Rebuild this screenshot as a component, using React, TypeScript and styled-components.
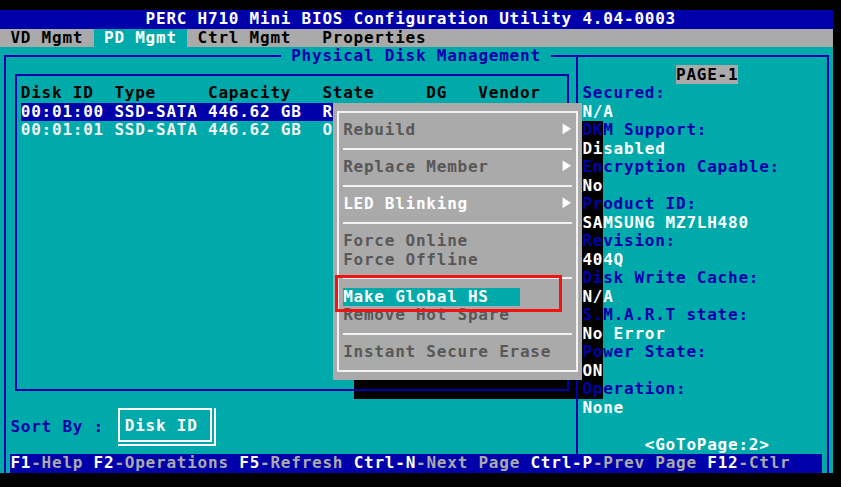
import React from "react";
import styled, { createGlobalStyle } from "styled-components";

const C = 10.4;
const R = 18.52;
const BLUE = "#0000aa";
const TEAL = "#00aaaa";
const GRAY = "#aaaaaa";
const DARK = "#585858";
const WHITE = "#ffffff";
const LINE = "#f2f2f2";

const Global = createGlobalStyle`
  html, body { margin: 0; padding: 0; background: #000; }
  body {
    font-family: "DejaVu Sans Mono", "Liberation Mono", monospace;
    font-weight: bold;
    font-size: 16px;
    letter-spacing: 0.767px;
  }
  #root { width: 841px; height: 487px; overflow: hidden; }
`;

const Screen = styled.div`
  position: relative;
  z-index: 0;
  margin-top: 10px;
  width: 833px;
  height: 463px;
  background: ${TEAL};
  display: flex;
  flex-direction: column;
  white-space: pre;
  line-height: ${R}px;
`;

const TitleBar = styled.div`
  height: ${R}px;
  flex: none;
  background: ${BLUE};
  color: ${WHITE};
  padding-left: ${14 * C}px;
`;

const TabBar = styled.div`
  height: ${R}px;
  flex: none;
  background: ${GRAY};
  display: flex;
`;

const Tab = styled.div<{ $active?: boolean; $offset?: number }>`
  padding: 0 ${C}px;
  margin-left: ${(p) => (p.$offset || 0) * C}px;
  background: ${(p) => (p.$active ? TEAL : "transparent")};
  color: ${(p) => (p.$active ? WHITE : "#000")};
`;

const Frame = styled.div`
  position: relative;
  flex: 1;
  margin: 8px 4px 0 4px;
  border: 2px solid ${BLUE};
  border-bottom: none;
  display: flex;
  flex-direction: column;
`;

const FrameTitle = styled.div`
  position: absolute;
  top: -10px;
  left: ${27 * C - 6}px;
  height: ${R}px;
  padding: 0 ${C}px;
  background: ${TEAL};
  color: ${BLUE};
`;

const Panels = styled.div`
  flex: 1;
  display: flex;
`;

const LeftPanel = styled.div`
  width: 570px;
  flex: none;
  display: flex;
  flex-direction: column;
`;

const ListBox = styled.div`
  box-sizing: border-box;
  margin: 17px 0 0 8.6px;
  width: 554px;
  height: 317px;
  border: 2px solid ${BLUE};
  padding: 8px 4.2px 0 4.2px;
`;

const ListHeader = styled.div`
  height: ${R}px;
  color: #000;
`;

const ListRow = styled.div<{ $selected?: boolean }>`
  height: ${R}px;
  width: ${52 * C}px;
  background: ${(p) => (p.$selected ? BLUE : "transparent")};
  color: ${(p) => (p.$selected ? WHITE : "#f2f2f2")};
`;

const SortRow = styled.div`
  display: flex;
  align-items: center;
  margin-top: 17.3px;
`;

const SortLabel = styled.div`
  margin-left: 4.4px;
  width: ${9 * C}px;
  color: ${BLUE};
`;

const SortBoxOuter = styled.div`
  margin-left: 14.3px;
  border-right: 2px solid ${WHITE};
  border-bottom: 2px solid ${WHITE};
  padding: 0 2px 2px 0;
`;

const SortBox = styled.div`
  border: 2px solid ${WHITE};
  padding: 7.1px 12.4px 3.6px 4.5px;
  color: ${WHITE};
`;

const RightPanel = styled.div`
  flex: 1;
  border-left: 2px solid ${BLUE};
  padding: 8.52px 0 0 4.4px;
`;

const InfoLine = styled.div<{ $kind: "label" | "value" }>`
  height: ${R}px;
  color: ${(p) => (p.$kind === "label" ? BLUE : WHITE)};
`;

const PageLine = styled.div`
  height: ${R}px;
  padding-left: ${9 * C}px;
`;

const PageTag = styled.span`
  background: ${GRAY};
  color: #000;
`;

const GoTo = styled.div`
  height: ${R}px;
  margin-top: ${R}px;
  padding-left: ${6 * C}px;
  color: ${WHITE};
`;

const BottomBar = styled.div`
  flex: none;
  height: ${R}px;
  margin-left: 4.4px;
  width: ${78 * C}px;
  background: ${BLUE};
`;

const Key = styled.span`
  color: ${WHITE};
`;

const Desc = styled.span`
  color: ${GRAY};
`;

const Shadow = styled.div<{ $x: number; $y: number; $w: number; $h: number }>`
  position: absolute;
  z-index: -1;
  left: ${(p) => p.$x * C}px;
  top: ${(p) => p.$y * R}px;
  width: ${(p) => p.$w * C}px;
  height: ${(p) => p.$h * R}px;
  background: #000;
`;

const Menu = styled.div`
  position: absolute;
  z-index: 2;
  left: ${32 * C}px;
  top: ${5 * R}px;
  width: ${24 * C}px;
  height: ${15 * R}px;
  box-sizing: border-box;
  padding: 8.26px 4.2px;
  background: ${GRAY};
`;

const MenuFrame = styled.div`
  box-sizing: border-box;
  height: 100%;
  border: 2px solid ${LINE};
  padding: 8.26px 4.2px 0 4.2px;
`;

const MenuItem = styled.div<{ $enabled?: boolean; $highlight?: boolean }>`
  height: ${R}px;
  display: flex;
  justify-content: space-between;
  width: ${(p) => (p.$highlight ? `${17 * C}px` : "auto")};
  background: ${(p) => (p.$highlight ? TEAL : "transparent")};
  color: ${(p) => (p.$enabled || p.$highlight ? WHITE : DARK)};
`;

const MenuSep = styled.div`
  height: ${R}px;
  background: linear-gradient(${LINE}, ${LINE}) center / 100% 2px no-repeat;
`;

const ArrowIcon = styled.svg`
  display: block;
  width: ${C}px;
  height: ${R}px;
`;

const Callout = styled.div`
  position: absolute;
  z-index: 3;
  left: 335px;
  top: 265px;
  width: 227px;
  height: 37px;
  box-sizing: border-box;
  border: 3px solid #f21313;
`;

const Arrow = () => (
  <ArrowIcon viewBox={`0 0 ${C} ${R}`}>
    <polygon points="0.6,2.4 9,7.8 0.6,13.2" fill={WHITE} />
  </ArrowIcon>
);

type MenuEntry =
  | { sep: true }
  | { label: string; enabled?: boolean; highlight?: boolean; sub?: boolean };

const menu: MenuEntry[] = [
  { label: "Rebuild", sub: true },
  { sep: true },
  { label: "Replace Member", sub: true },
  { sep: true },
  { label: "LED Blinking", enabled: true, sub: true },
  { sep: true },
  { label: "Force Online" },
  { label: "Force Offline" },
  { sep: true },
  { label: "Make Global HS", highlight: true },
  { label: "Remove Hot Spare" },
  { sep: true },
  { label: "Instant Secure Erase" },
];

const info: { text: string; kind: "label" | "value" }[] = [
  { text: "Secured:", kind: "label" },
  { text: "N/A", kind: "value" },
  { text: "DKM Support:", kind: "label" },
  { text: "Disabled", kind: "value" },
  { text: "Encryption Capable:", kind: "label" },
  { text: "No", kind: "value" },
  { text: "Product ID:", kind: "label" },
  { text: "SAMSUNG MZ7LH480", kind: "value" },
  { text: "Revision:", kind: "label" },
  { text: "404Q", kind: "value" },
  { text: "Disk Write Cache:", kind: "label" },
  { text: "N/A", kind: "value" },
  { text: "S.M.A.R.T state:", kind: "label" },
  { text: "No Error", kind: "value" },
  { text: "Power State:", kind: "label" },
  { text: "ON", kind: "value" },
  { text: "Operation:", kind: "label" },
  { text: "None", kind: "value" },
];

const keys: [string, string][] = [
  ["F1", "-Help "],
  ["F2", "-Operations "],
  ["F5", "-Refresh "],
  ["Ctrl-N", "-Next Page "],
  ["Ctrl-P", "-Prev Page "],
  ["F12", "-Ctlr"],
];

const disks = [
  { id: "00:01:00", type: "SSD-SATA", cap: "446.62 GB", state: "Ready", dg: "--", vendor: "ATA" },
  { id: "00:01:01", type: "SSD-SATA", cap: "446.62 GB", state: "Online", dg: "--", vendor: "ATA" },
];

const pad = (s: string, n: number) => s + " ".repeat(Math.max(0, n - s.length));

export default function App() {
  return (
    <>
      <Global />
      <Screen>
        <TitleBar>PERC H710 Mini BIOS Configuration Utility 4.04-0003</TitleBar>
        <TabBar>
          <Tab>VD Mgmt</Tab>
          <Tab $active>PD Mgmt</Tab>
          <Tab>Ctrl Mgmt</Tab>
          <Tab $offset={1}>Properties</Tab>
        </TabBar>
        <Frame>
          <FrameTitle>Physical Disk Management</FrameTitle>
          <Panels>
            <LeftPanel>
              <ListBox>
                <ListHeader>
                  {pad("Disk ID", 9) + pad("Type", 9) + pad("Capacity", 11) + pad("State", 10) + pad("DG", 5) + "Vendor"}
                </ListHeader>
                {disks.map((d, i) => (
                  <ListRow key={d.id} $selected={i === 0}>
                    {pad(d.id, 9) + pad(d.type, 9) + pad(d.cap, 11) + pad(d.state, 10) + pad(d.dg, 5) + d.vendor}
                  </ListRow>
                ))}
              </ListBox>
              <SortRow>
                <SortLabel>Sort By :</SortLabel>
                <SortBoxOuter>
                  <SortBox>Disk ID</SortBox>
                </SortBoxOuter>
              </SortRow>
            </LeftPanel>
            <RightPanel>
              <PageLine>
                <PageTag>PAGE-1</PageTag>
              </PageLine>
              {info.map((l, i) => (
                <InfoLine key={i} $kind={l.kind}>
                  {l.text}
                </InfoLine>
              ))}
              <GoTo>{"<GoToPage:2>"}</GoTo>
            </RightPanel>
          </Panels>
          <BottomBar>
            {keys.map(([k, d]) => (
              <React.Fragment key={k}>
                <Key>{k}</Key>
                <Desc>{d}</Desc>
              </React.Fragment>
            ))}
          </BottomBar>
        </Frame>

        <Shadow $x={56} $y={6} $w={2} $h={15} />
        <Shadow $x={34} $y={20} $w={22} $h={1} />

        <Menu>
          <MenuFrame>
            {menu.map((m, i) =>
              "sep" in m ? (
                <MenuSep key={i} />
              ) : (
                <MenuItem key={i} $enabled={m.enabled} $highlight={m.highlight}>
                  <span>{m.label}</span>
                  {m.sub && <Arrow />}
                </MenuItem>
              )
            )}
          </MenuFrame>
        </Menu>

        <Callout />
      </Screen>
    </>
  );
}
